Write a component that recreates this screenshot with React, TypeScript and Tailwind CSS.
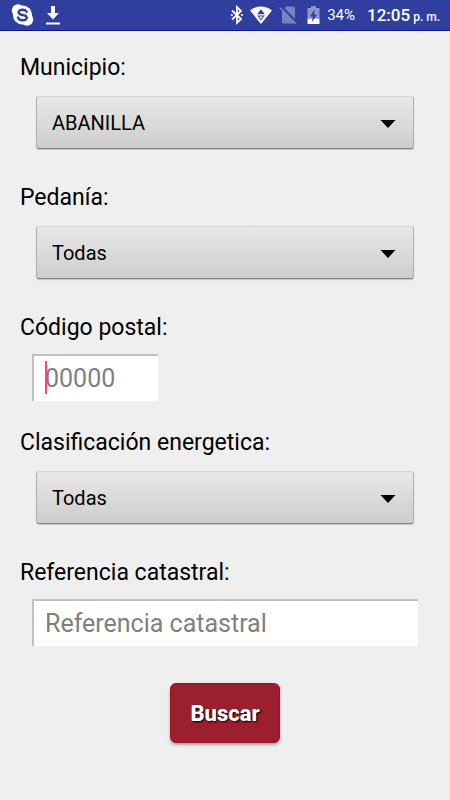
import type { ReactNode } from "react";

function StatusBar() {
  return (
    <header className="flex h-[31px] items-center border-b border-[#0a14a8] bg-[#303f9f] pr-[10px] pl-[11px] text-white">
      <svg className="h-6 w-[23px]" viewBox="0 0 23 24" aria-hidden="true">
        <circle cx="7" cy="7.5" r="6.2" fill="#fff" />
        <circle cx="16" cy="16.5" r="6.2" fill="#fff" />
        <circle cx="11.5" cy="12" r="9.6" fill="#fff" />
        <path
          d="M15.6 8.9C15 7.400 13.600 6.700 11.600 6.700C9.300 6.700 7.600 7.700 7.600 9.400C7.600 13 15.700 10.900 15.700 14.400C15.700 16.200 13.900 17.200 11.500 17.200C9.200 17.200 7.500 16.300 7 14.600"
          fill="none"
          stroke="#303f9f"
          strokeWidth="2.400"
          strokeLinecap="round"
        />
      </svg>
      <svg className="ml-[11px] h-5 w-4" viewBox="0 0 16 20" fill="#fff" aria-hidden="true">
        <path d="M6 1h4v7h4l-6 6.500L2 8h4zM1 17.500h14v2H1z" />
      </svg>
      <div className="ml-auto flex items-center">
        <svg className="h-5 w-[14px]" viewBox="0 0 14 20" fill="none" stroke="#fff" aria-hidden="true">
          <path d="M2 5.500L11 14L7 17.800V2.200L11 6L2 14.500" strokeWidth="1.800" />
          <circle cx="1.800" cy="10" r="1.100" fill="#fff" stroke="none" />
          <circle cx="12" cy="10" r="1.100" fill="#fff" stroke="none" />
        </svg>
        <svg className="ml-[6px] h-5 w-[22px]" viewBox="0 0 22 20" aria-hidden="true">
          <path d="M0 5.500C6.500 0.300 15.500 0.300 22 5.500L11 19z" fill="#fff" />
          <path d="M11 4.200l3.800 5H7.200zM7.200 10.500h7.600L11 15.500z" fill="#303f9f" />
          <path d="M9 11.500h4L11 14z" fill="#fff" />
        </svg>
        <svg className="ml-[7px] h-5 w-[18px]" viewBox="0 0 18 20" aria-hidden="true">
          <path d="M7 1.500h7.500A1.500 1.500 0 0 1 16 3v14a1.500 1.500 0 0 1-1.500 1.500h-10A1.500 1.500 0 0 1 3 17V5.500z" fill="#7782c2" />
          <path d="M2 1.200L18 17.200" stroke="#303f9f" strokeWidth="2.200" />
          <path d="M0.500 2.500L17 19" stroke="#7782c2" strokeWidth="1.500" />
        </svg>
        <svg className="ml-[10px] h-5 w-[13px]" viewBox="0 0 13 20" aria-hidden="true">
          <path d="M4 1h5v2h3.500v10.500H0.500V3H4z" fill="#8d96cc" />
          <path d="M0.500 13.500h12V19H0.500z" fill="#fff" />
          <path d="M7.500 4.500L3 11.500h2.800L5 17l5-7.300H7.200z" fill="#303f9f" />
        </svg>
        <span className="ml-[7px] text-[15px] leading-5">34%</span>
        <span className="ml-3 text-[17px] leading-5 font-medium">12:05</span>
        <span className="ml-[3px] pt-1 text-xs leading-4 font-medium">p. m.</span>
      </div>
    </header>
  );
}

function Label({ htmlFor, children }: { htmlFor: string; children: ReactNode }) {
  return (
    <label htmlFor={htmlFor} className="block text-[23px] leading-[34px]">
      {children}
    </label>
  );
}

function SelectField({ id, label, options }: { id: string; label: string; options: string[] }) {
  return (
    <div className="mb-8">
      <Label htmlFor={id}>{label}</Label>
      <div className="relative mx-4 mt-[11px]">
        <select
          id={id}
          className="block h-[53px] w-full appearance-none rounded-[3px] border border-t-[#d4d4d4] border-r-[#b0b0b0] border-b-[#808080] border-l-[#b0b0b0] bg-linear-to-b from-[#e8e8e8] to-[#cdcdcd] px-[15px] text-xl text-black shadow-[0_1px_1px_#c4c4c4] outline-none"
        >
          {options.map((option) => (
            <option key={option}>{option}</option>
          ))}
        </select>
        <svg
          className="pointer-events-none absolute top-6 right-[18px] h-2 w-4"
          viewBox="0 0 16 8"
          aria-hidden="true"
        >
          <path d="M0.500 0h15L8 8z" fill="#000" />
        </svg>
      </div>
    </div>
  );
}

const inputStyle =
  "block h-[47px] w-full border-t-2 border-l-2 border-[#c0c0c0] bg-white pl-[11px] text-[25px] text-black outline-none placeholder:text-[#808080]";

export default function App() {
  return (
    <div className="min-h-screen bg-[#efefef] font-['Roboto',sans-serif] text-black">
      <StatusBar />
      <form className="px-5 pt-5 pb-8" onSubmit={(event) => event.preventDefault()}>
        <SelectField id="municipio" label="Municipio:" options={["ABANILLA"]} />
        <SelectField id="pedania" label="Pedanía:" options={["Todas"]} />
        <div className="mb-[25px]">
          <Label htmlFor="postal">Código postal:</Label>
          <div className="relative mx-3 mt-[9px] w-[126px]">
            <input id="postal" type="text" inputMode="numeric" placeholder="00000" className={inputStyle} />
            <span className="absolute top-[7px] left-[13px] h-[33px] w-[2px] bg-[#ff4081]" />
          </div>
        </div>
        <SelectField id="clasificacion" label="Clasificación energetica:" options={["Todas"]} />
        <div>
          <Label htmlFor="referencia">Referencia catastral:</Label>
          <div className="mx-3 mt-[9px]">
            <input id="referencia" type="text" placeholder="Referencia catastral" className={inputStyle} />
          </div>
        </div>
        <button
          type="submit"
          className="mx-auto mt-[37px] block h-[60px] rounded-md border border-[#a80f1c] bg-[#9b1f2e] px-[19px] text-[22px] font-extrabold text-white shadow-[0_2px_3px_#a8a8a8] [text-shadow:1px_1px_2px_#000000]"
        >
          Buscar
        </button>
      </form>
    </div>
  );
}
